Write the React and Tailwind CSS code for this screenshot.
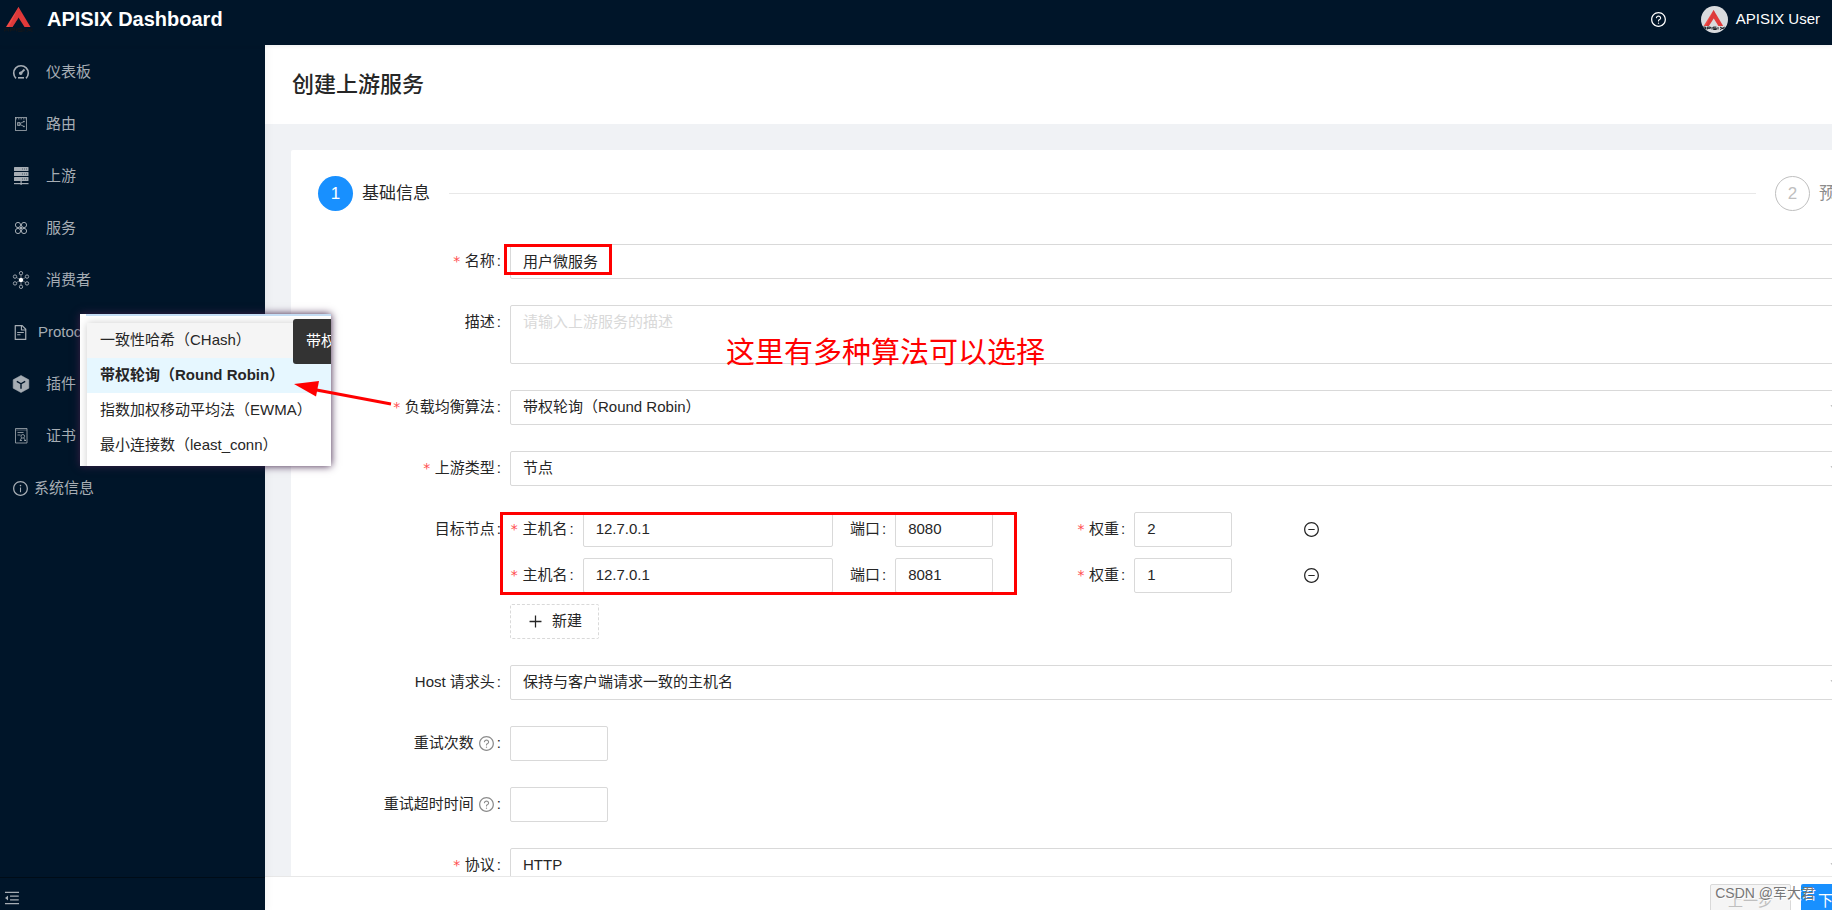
import { useState } from 'react';
import {
  AiOutlineDown,
  AiOutlineFileText,
  AiOutlineInfoCircle,
  AiOutlineMenuFold,
  AiOutlineMinusCircle,
  AiOutlinePlus,
  AiOutlineQuestionCircle,
} from 'react-icons/ai';

const fieldClass =
  'block w-full h-[35px] px-3 bg-white border border-[#d9d9d9] rounded-[2px] text-[15px] text-[#262626] focus:outline-none focus:border-[#1890ff]';
const inputClass = `${fieldClass} pb-0.5`;

function Logo({ className }) {
  return (
    <svg className={className} viewBox="0 0 30 26" aria-hidden="true">
      <path d="M14.500 1L26.500 21H20.500L14.500 11.500 12.500 8z" fill="#e23a3a" />
      <path d="M14.500 1L2 21H8.500L16.500 8.500z" fill="#f04b46" />
      <path d="M14.500 1L17 8 8.500 21H5z" fill="#c92a2f" fillOpacity="0.5" />
      <path
        d="M0.500 22.500h4v3M0.500 25.500v-1.500h4M6.500 25.500v-3h4v1.500h-4M12.500 22.500v3M18 22.500h-4v1.500h4v1.500h-4M20 22.500v3M22.500 22.500l6 3M28.500 22.500l-6 3"
        fill="none"
        stroke="#11161c"
        strokeWidth="1.200"
      />
    </svg>
  );
}

function DashboardIcon() {
  return (
    <svg className="size-[18px]" viewBox="0 0 18 18" fill="none" stroke="currentColor" strokeWidth="1.6">
      <path d="M4 15.300a7.300 7.300 0 1 1 10 0" />
      <path d="M6 14.800h6" />
      <path d="M8.500 10.500l4-4" strokeWidth="1.800" />
      <circle cx="8.700" cy="10.300" r="1" fill="currentColor" />
    </svg>
  );
}

function RouteIcon() {
  return (
    <svg className="size-[18px]" viewBox="0 0 18 18" fill="none" stroke="currentColor" strokeWidth="0.8">
      <rect x="3.500" y="2.500" width="11" height="13" />
      <path d="M3.500 3.800h11" strokeDasharray="1.500 1" />
      <path d="M5.500 7.500h2.500v3H5.500zM8 8.500l4-2M8 9.500l4 2M6 9h2" />
      <circle cx="12" cy="6.500" r="0.500" />
      <circle cx="12" cy="11.500" r="0.500" />
    </svg>
  );
}

function UpstreamIcon() {
  return (
    <svg className="size-[18px]" viewBox="0 0 18 18" fill="currentColor">
      <rect x="2" y="0" width="14.500" height="4" rx="0.600" />
      <rect x="2" y="5" width="14.500" height="4" rx="0.600" />
      <rect x="2" y="10" width="14.500" height="4" rx="0.600" />
      <rect x="8.500" y="14" width="1.200" height="4" />
      <rect x="2" y="16" width="14.500" height="1.200" />
      <path
        d="M10 2h1M12 2h1M14 2h1M10 7h1M12 7h1M14 7h1M10 12h1M12 12h1M14 12h1"
        stroke="#001529"
        strokeWidth="0.800"
        strokeOpacity="0.700"
      />
    </svg>
  );
}

function ServiceIcon() {
  return (
    <svg className="size-[18px]" viewBox="0 0 18 18" fill="none" stroke="currentColor" strokeWidth="1">
      <circle cx="6" cy="6" r="2.600" />
      <circle cx="12" cy="6" r="2.600" />
      <circle cx="6" cy="12" r="2.600" />
      <circle cx="12" cy="12" r="2.600" />
      <path d="M7.800 7.800l2.400 2.400M10.200 7.800l-2.400 2.400" />
    </svg>
  );
}

function ConsumerIcon() {
  return (
    <svg className="size-[18px]" viewBox="0 0 18 18" fill="none" stroke="currentColor" strokeWidth="0.9">
      <circle cx="9" cy="2.200" r="1.700" />
      <circle cx="9" cy="15.800" r="1.700" />
      <circle cx="3" cy="5.600" r="1.700" />
      <circle cx="15" cy="5.600" r="1.700" />
      <circle cx="3" cy="12.400" r="1.700" />
      <circle cx="15" cy="12.400" r="1.700" />
      <path d="M9 4v3M9 11v3M4.500 6.500L7 8M13.500 6.500L11 8M4.500 11.500L7 10M13.500 11.500L11 10" strokeWidth="0.600" />
      <circle cx="9" cy="9" r="2.200" fill="#fff" stroke="none" />
    </svg>
  );
}

function PluginIcon() {
  return (
    <svg className="size-[18px]" viewBox="0 0 18 18">
      <path d="M9 0.500l7.800 4.300v8.400L9 17.500 1.200 13.200V4.800z" fill="currentColor" strokeLinejoin="round" stroke="currentColor" strokeWidth="0.600" />
      <path d="M4.800 6.300L9 8.800l4.200-2.500M9 8.800v5" fill="none" stroke="#001529" strokeWidth="1.400" />
    </svg>
  );
}

function CertificateIcon() {
  return (
    <svg className="size-[18px]" viewBox="0 0 18 18" fill="none" stroke="currentColor" strokeWidth="0.8">
      <path d="M3.500 1.500h11.500v14.500H3.500z" />
      <path d="M3.500 3h11.500" strokeWidth="0.500" />
      <path d="M5.500 5.500h6M5.500 8h3" />
      <circle cx="10.800" cy="9.300" r="1.800" />
      <path d="M9.500 11l-1.500 3M11.800 11l2 3M8 13.500h2M12 13.500h2" />
    </svg>
  );
}

const menu = [
  { label: '仪表板', icon: <DashboardIcon />, gap: 'gap-4' },
  { label: '路由', icon: <RouteIcon />, gap: 'gap-4' },
  { label: '上游', icon: <UpstreamIcon />, gap: 'gap-4' },
  { label: '服务', icon: <ServiceIcon />, gap: 'gap-4' },
  { label: '消费者', icon: <ConsumerIcon />, gap: 'gap-4' },
  { label: 'Protocol Buffers', icon: <AiOutlineFileText className="size-[17px]" />, gap: 'gap-[9px]' },
  { label: '插件', icon: <PluginIcon />, gap: 'gap-4' },
  { label: '证书', icon: <CertificateIcon />, gap: 'gap-4' },
  { label: '系统信息', icon: <AiOutlineInfoCircle className="size-[17px]" />, gap: 'gap-[5px]' },
];

const algorithms = ['一致性哈希（CHash）', '带权轮询（Round Robin）', '指数加权移动平均法（EWMA）', '最小连接数（least_conn）'];

function Label({ htmlFor, required, help, children }) {
  return (
    <label htmlFor={htmlFor} className="flex h-[35px] items-center whitespace-nowrap">
      {required && <span className="mr-1 font-['DejaVu_Sans_Mono',monospace] text-[14px] text-[#ff4d4f]">*</span>}
      {children}
      {help && <AiOutlineQuestionCircle className="ml-1 size-[17px] text-[#8c8c8c]" />}
      <span className="ml-0.5 mr-[9px]">:</span>
    </label>
  );
}

function Row({ label, id, required, help, children }) {
  return (
    <div className="flex">
      <div className="flex w-48 shrink-0 justify-end">
        <Label htmlFor={id} required={required} help={help}>
          {label}
        </Label>
      </div>
      <div className="relative min-w-0 flex-1">{children}</div>
    </div>
  );
}

function Select({ id, options, defaultValue }) {
  return (
    <div className="relative">
      <select id={id} defaultValue={defaultValue} className={`${fieldClass} appearance-none`}>
        {options.map((o) => (
          <option key={o}>{o}</option>
        ))}
      </select>
      <AiOutlineDown className="pointer-events-none absolute right-3 top-3 size-[12px] text-[#bfbfbf]" />
    </div>
  );
}

function NodeRow({ index, node, onChange, onRemove }) {
  return (
    <div className="grid grid-cols-12 gap-x-[17px]">
      <div className="col-span-3 flex">
        <Label htmlFor={`host-${index}`} required>主机名</Label>
        <input id={`host-${index}`} className={inputClass} value={node.host} onChange={(e) => onChange('host', e.target.value)} />
      </div>
      <div className="col-span-2 flex">
        <Label htmlFor={`port-${index}`}>端口</Label>
        <input id={`port-${index}`} className={`${inputClass} max-w-[98px]`} value={node.port} onChange={(e) => onChange('port', e.target.value)} />
      </div>
      <div className="col-span-2 flex">
        <Label htmlFor={`weight-${index}`} required>权重</Label>
        <input id={`weight-${index}`} className={`${inputClass} max-w-[98px]`} value={node.weight} onChange={(e) => onChange('weight', e.target.value)} />
      </div>
      <div className="col-span-2 flex items-center">
        <button type="button" aria-label="删除" onClick={onRemove}>
          <AiOutlineMinusCircle className="size-[17px]" />
        </button>
      </div>
    </div>
  );
}

function AlgorithmPopup() {
  return (
    <div className="absolute left-[80px] top-[314px] z-30 h-[152px] w-[251px] overflow-hidden bg-white shadow-[0_0_8px_#3c1e46]">
      <div className="ml-1.5 h-0.5 bg-[#c5def5]" />
      <ul className="ml-[7px] mt-[7px] bg-white pb-5 shadow-[0_0_8px_rgba(0,0,0,0.2)]">
        {algorithms.map((name, i) => (
          <li
            key={name}
            className={`flex h-[35px] items-center whitespace-nowrap pl-[13px] ${
              i === 0 ? 'bg-[#f5f5f5]' : i === 1 ? 'bg-[#e6f7ff] font-bold' : 'bg-white'
            }`}
          >
            {name}
          </li>
        ))}
      </ul>
      <div className="absolute left-[213px] top-[5px] flex h-[45px] items-center whitespace-nowrap rounded-[3px] bg-[#333] px-[13px] text-white">
        带权轮询
      </div>
    </div>
  );
}

export default function App() {
  const [nodes, setNodes] = useState([
    { host: '12.7.0.1', port: '8080', weight: '2' },
    { host: '12.7.0.1', port: '8081', weight: '1' },
  ]);

  const updateNode = (index, key, value) => {
    setNodes(nodes.map((n, i) => (i === index ? { ...n, [key]: value } : n)));
  };

  return (
    <div
      lang="zh-CN"
      className="relative flex h-screen flex-col overflow-hidden bg-[#f0f2f5] font-['Liberation_Sans','Noto_Sans_CJK_SC',sans-serif] text-[15px] text-[#262626]"
    >
      <header className="z-20 flex h-[45px] shrink-0 items-center bg-[#001529] pb-[7px] pl-1 pr-3 text-white shadow-[0_1px_4px_rgba(0,21,41,0.08)]">
        <Logo className="h-[26px] w-[30px]" />
        <h1 className="ml-[13px] text-[20px] font-bold">APISIX Dashboard</h1>
        <a href="#help" aria-label="帮助" className="ml-auto">
          <AiOutlineQuestionCircle className="size-[17px]" />
        </a>
        <div className="ml-[34px] flex items-center gap-2">
          <span className="flex size-[27px] items-center justify-center overflow-hidden rounded-full bg-[#d9dbde]">
            <Logo className="h-[21px] w-[24px]" />
          </span>
          <span>APISIX User</span>
        </div>
      </header>

      <div className="flex min-h-0 flex-1">
        <aside className="z-10 flex w-[265px] shrink-0 flex-col bg-[#001529] text-[#a6adb4] shadow-[2px_0_8px_rgba(29,35,41,0.05)]">
          <nav className="flex-1 pt-px">
            {menu.map((item) => (
              <a key={item.label} href="#menu" className={`flex h-[52px] items-center pl-3 ${item.gap}`}>
                {item.icon}
                <span>{item.label}</span>
              </a>
            ))}
          </nav>
          <div className="flex h-[33px] items-center border-t border-[#000c17] pl-[3px] pt-2">
            <button type="button" aria-label="收起菜单">
              <AiOutlineMenuFold className="size-[18px]" />
            </button>
          </div>
        </aside>

        <main className="flex min-w-0 flex-1 flex-col overflow-hidden">
          {/* the content is wider than the window and runs off its right edge */}
          <div className="-mr-[74px] min-h-0 flex-1 overflow-hidden">
            <div className="bg-white px-[27px] py-6">
              <h2 className="text-[22px] font-medium leading-[31px]">创建上游服务</h2>
            </div>

            <div className="mx-[26px] mt-[26px] rounded-[2px] bg-white px-[27px] py-[26px]">
              <ol className="flex items-center text-[17px]">
                <li className="flex flex-1 items-center">
                  <span className="mr-[9px] flex size-[35px] items-center justify-center rounded-full bg-[#1890ff] text-white">1</span>
                  基础信息
                  <span className="mx-[19px] h-px flex-1 bg-[#e8e8e8]" />
                </li>
                <li className="flex items-center text-[#8c8c8c]">
                  <span className="mr-[9px] flex size-[35px] items-center justify-center rounded-full border border-[#bfbfbf] text-[#bfbfbf]">2</span>
                  预览
                </li>
              </ol>

              <form className="mt-[33px] flex flex-col gap-[26px]" onSubmit={(e) => e.preventDefault()}>
                <Row label="名称" id="name" required>
                  <input id="name" className={inputClass} defaultValue="用户微服务" />
                  <div className="pointer-events-none absolute -left-[6px] top-0 h-[31px] w-[108px] border-3 border-[#ff0000]" />
                </Row>
                <Row label="描述" id="desc">
                  <textarea
                    id="desc"
                    className="block h-[59px] w-full resize-none rounded-[2px] border border-[#d9d9d9] bg-white px-3 py-1 leading-6 placeholder:text-[#d9d9d9]"
                    placeholder="请输入上游服务的描述"
                  />
                  <p className="pointer-events-none absolute left-[216px] top-[29px] text-[29px] leading-[38px] text-[#ff0000]">
                    这里有多种算法可以选择
                  </p>
                </Row>
                <Row label="负载均衡算法" id="algorithm" required>
                  <Select id="algorithm" options={algorithms} defaultValue="带权轮询（Round Robin）" />
                </Row>
                <Row label="上游类型" id="type" required>
                  <Select id="type" options={['节点', '服务发现']} defaultValue="节点" />
                </Row>
                <Row label="目标节点" id="host-0">
                  <div className="flex flex-col gap-[11px]">
                    {nodes.map((node, i) => (
                      <NodeRow
                        key={i}
                        index={i}
                        node={node}
                        onChange={(key, value) => updateNode(i, key, value)}
                        onRemove={() => setNodes(nodes.filter((_, n) => n !== i))}
                      />
                    ))}
                    <button
                      type="button"
                      onClick={() => setNodes([...nodes, { host: '', port: '', weight: '1' }])}
                      className="flex h-[35px] items-center gap-2 self-start rounded-[2px] border border-dashed border-[#d9d9d9] px-4"
                    >
                      <AiOutlinePlus className="size-[17px]" />
                      新建
                    </button>
                  </div>
                  <div className="pointer-events-none absolute -left-[10px] top-0 h-[83px] w-[517px] border-3 border-[#ff0000]" />
                </Row>
                <Row label="Host 请求头" id="passHost">
                  <Select id="passHost" options={['保持与客户端请求一致的主机名']} defaultValue="保持与客户端请求一致的主机名" />
                </Row>
                <Row label="重试次数" id="retries" help>
                  <input id="retries" className={`${inputClass} max-w-[98px]`} />
                </Row>
                <Row label="重试超时时间" id="retryTimeout" help>
                  <input id="retryTimeout" className={`${inputClass} max-w-[98px]`} />
                </Row>
                <Row label="协议" id="scheme" required>
                  <Select id="scheme" options={['HTTP', 'HTTPS', 'gRPC']} defaultValue="HTTP" />
                </Row>
              </form>
            </div>
          </div>

          <footer className="-mr-[74px] flex h-[34px] shrink-0 items-start justify-end gap-2.5 border-t border-[#e8e8e8] bg-white pr-[26px] pt-[7px]">
            <button type="button" disabled className="h-[35px] shrink-0 rounded-[2px] border border-[#d9d9d9] bg-[#f5f5f5] px-[17px] text-[#bfbfbf]">
              上一步
            </button>
            <button type="button" className="h-[35px] shrink-0 rounded-[2px] bg-[#1890ff] px-[17px] text-white">
              下一步
            </button>
          </footer>
        </main>
      </div>

      <AlgorithmPopup />
      <svg className="pointer-events-none absolute left-[294px] top-[380px] z-30 h-[26px] w-[98px]" viewBox="0 0 98 26">
        <path d="M20 9.500L97 24" stroke="#f00" strokeWidth="3" />
        <path d="M0 4L25 1L22 16.500z" fill="#f00" />
      </svg>
      <span className="pointer-events-none absolute bottom-1.5 right-[17px] z-30 text-[14px] text-[#777] [text-shadow:1px_1px_0_#fff]">
        CSDN @军大君
      </span>
    </div>
  );
}
